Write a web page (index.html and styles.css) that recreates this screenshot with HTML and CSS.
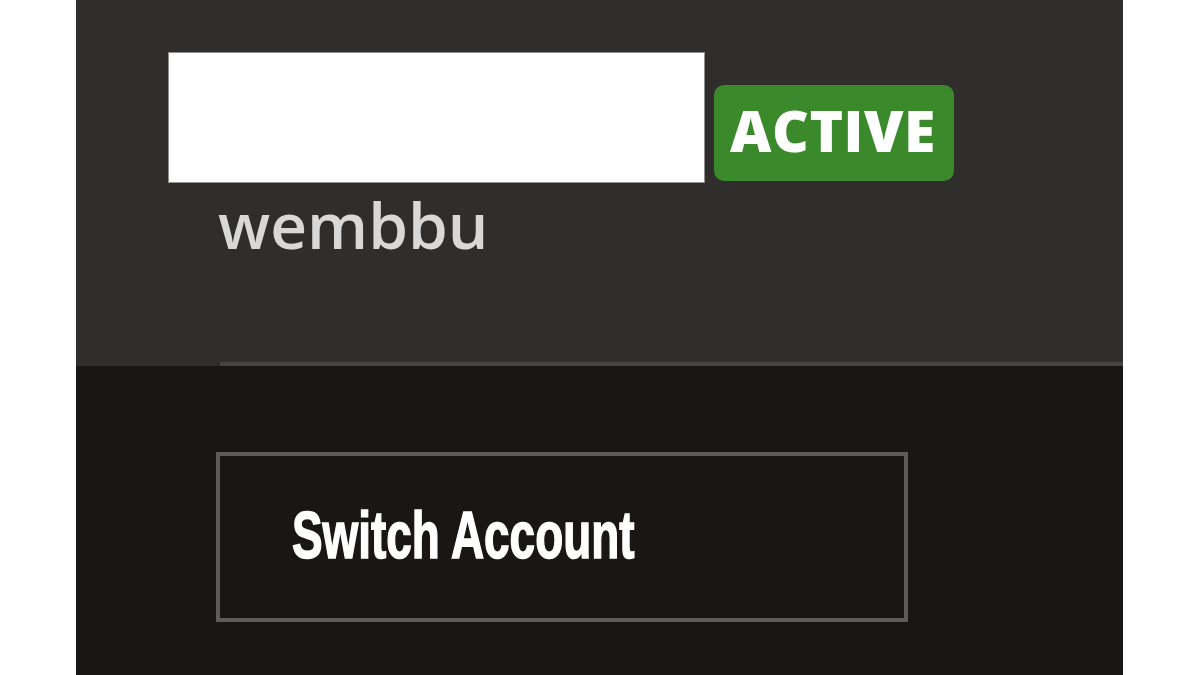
FILE: index.html
```html
<!DOCTYPE html>
<html>
<head>
<meta charset="utf-8">
<link rel="stylesheet" href="styles.css">
</head>
<body>
<div class="panel">
  <section class="top">
    <div class="head">
      <div class="namebox"></div>
      <span class="badge">ACTIVE</span>
    </div>
    <div class="user">wembbu</div>
    <div class="sep"></div>
  </section>
  <section class="bottom">
    <div class="btn"><span class="btn-label">Switch Account</span></div>
  </section>
</div>
</body>
</html>
```

FILE: styles.css
```css
html, body {
  margin: 0;
  padding: 0;
  background: #ffffff;
}

.panel {
  margin-left: 76px;
  width: 1047px;
  height: 675px;
  display: flex;
  flex-direction: column;
}

.top {
  height: 366px;
  box-sizing: border-box;
  padding-top: 52px;
  background: #2f2e2c;
  display: flex;
  flex-direction: column;
}

.head {
  display: flex;
  align-items: flex-end;
  gap: 9px;
  padding-left: 92px;
}

.namebox {
  width: 537px;
  height: 131px;
  box-sizing: border-box;
  background: #ffffff;
  border: 1px solid #8f8f8f;
}

.badge {
  height: 96px;
  box-sizing: border-box;
  margin-bottom: 2px;
  padding: 17px 18px 0 16px;
  background: #3a8a2b;
  border-radius: 10px;
  color: #ffffff;
  font-family: "Open Sans", "DejaVu Sans", sans-serif;
  font-weight: 800;
  font-size: 57px;
  line-height: 57px;
  letter-spacing: 0.5px;
}

.user {
  margin-top: 10px;
  margin-left: 142px;
  color: #d8d8d8;
  font-family: "Open Sans", "DejaVu Sans", sans-serif;
  font-weight: 600;
  font-size: 64px;
  line-height: 64px;
  letter-spacing: 0;
}

.sep {
  margin-top: auto;
  margin-left: 144px;
  height: 4px;
  background: #464544;
}

.bottom {
  flex: 1;
  background: #181716;
  padding-top: 86px;
  padding-left: 140px;
}

.btn {
  width: 692px;
  height: 170px;
  box-sizing: border-box;
  border: 4px solid #5d5c5b;
  padding: 45px 0 0 72px;
  color: #ffffff;
  font-family: "Liberation Sans", Arial, sans-serif;
  font-weight: 700;
  font-size: 67px;
  line-height: 67px;
  white-space: nowrap;
  overflow: hidden;
}

.btn-label {
  display: inline-block;
  transform: scaleX(0.685);
  transform-origin: left center;
  -webkit-text-stroke: 1.6px #ffffff;
}
```
